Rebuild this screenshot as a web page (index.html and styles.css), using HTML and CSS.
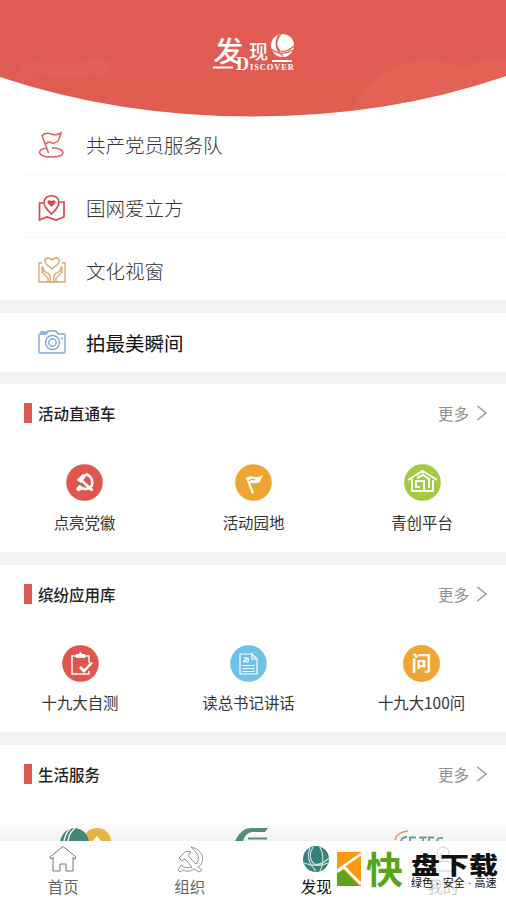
FILE: index.html
```html
<!DOCTYPE html>
<html lang="zh-CN">
<head>
<meta charset="utf-8">
<title>发现</title>
<link rel="stylesheet" href="styles.css">
</head>
<body>
<div class="app">
  <header class="hero">
    <svg class="hero-art" viewBox="0 0 506 117" width="506" height="117">
      <defs>
        <linearGradient id="red" x1="0" y1="0" x2="0" y2="1"><stop offset="0" stop-color="#e25a54"/><stop offset="1" stop-color="#df5d50"/></linearGradient>
        <clipPath id="arc"><path d="M0 0H506V76Q388 116.500 253 116.500Q118 116.500 0 77Z"/></clipPath>
      </defs>
      <g clip-path="url(#arc)">
        <path fill="url(#red)" d="M0 0H506V117H0Z"/>
        <path fill="#e36658" opacity=".6" d="M352 110Q376 64 422 60Q452 60 466 68Q480 54 506 60V117H352Z"/>
        <path fill="#e46b62" opacity=".35" d="M16 78Q18 64 34 61Q60 68 90 60Q112 58 112 66Q102 82 96 74Q60 84 36 72L27 80Z"/>
      </g>
      <g fill="#fff">
        <text class="logo-fa" transform="translate(213 61.500) skewX(-5)">发</text>
        <text class="logo-xian" x="249" y="59">现</text>
        <text class="logo-d" x="236" y="69.500">D</text>
        <text class="logo-en" x="250" y="69.500" textLength="44">ISCOVER</text>
        <path d="M213 66.500h20v2h-20zM272 60h20v2h-20z"/>
        <circle cx="282.500" cy="45.500" r="11.500"/>
      </g>
      <g fill="none" stroke="#df5b52" stroke-width="1.200"><path d="M279 34.500Q272 47 283 56.500M281 34Q273 44 280 51Q286 53 294 46M271 49Q281 57 293 50"/></g>
    </svg>
  </header>

  <nav class="list">
    <a class="row"><svg class="row-icon" viewBox="0 0 28 28" fill="none" stroke="#d95f62" stroke-width="1.500"><path d="M10.500 22L4 4.500Q8 1 13 3Q18 5 23 2Q22 6 20 10Q15 14 12 11Q9 11 8 13M9 17Q1.500 18 1.500 21.500Q3 26 13 26Q25 26 25 21.500Q24 17 14 17"/></svg><span>共产党员服务队</span></a>
    <a class="row row-mid"><svg class="row-icon" viewBox="0 0 28 28" fill="none" stroke="#d4494e" stroke-width="1.700"><path d="M5 9H1.500V26L9 23L18 26L26 23V8H22M13.500 20Q6 13 6 8.500C6 -.5 21 -.5 21 8.500Q21 13 13.500 20Z"/><path fill="#d4494e" stroke="none" d="M13.500 13L9.500 9Q9 5 13.500 7Q18 5 17.500 9Z"/></svg><span>国网爱立方</span></a>
    <a class="row"><svg class="row-icon" viewBox="0 0 28 28" fill="none" stroke="#d9a568" stroke-width="1.300"><path d="M4 6H1V25H27V6H24M14 12L8 7Q5 1 10 1Q13 1 14 3Q16 1 19 1Q23 2 20 7ZM4 10V15L10 21V25M4 10Q5 9 6 14L11 17Q13 19 12 25M24 10V15L18 21V25M24 10Q23 9 22 14L17 17Q15 19 16 25"/></svg><span>文化视窗</span></a>
  </nav>

  <nav class="list list-single">
    <a class="row row-dark"><svg class="row-icon" viewBox="0 0 28 28" fill="none" stroke="#7ba6d6" stroke-width="1.400"><path d="M1 6Q1 5 2 5H8L10 2H18L20 5H26Q27 5 27 6V23Q27 24 26 24H2Q1 24 1 23ZM3 5V3H7V5"/><circle cx="14.500" cy="13.500" r="7"/><circle cx="14.500" cy="13.500" r="3.700"/><path d="M23 9.500h2"/></svg><span>拍最美瞬间</span></a>
  </nav>

  <section class="panel">
    <div class="panel-head"><h2>活动直通车</h2><a class="more">更多<svg viewBox="0 0 12 18" width="12" height="18"><path d="M1.500 2L10 9L1.500 16"/></svg></a></div>
    <div class="grid grid-a">
      <a class="tile"><svg class="disc" viewBox="0 0 37 37"><circle cx="18.500" cy="18.500" r="18.300" fill="#df564f"/><path fill="none" stroke="#fff" stroke-width="2.600" d="M19.500 10C29 13 28 25 20 25Q16 25 13 22M15 16L26.500 26.500"/><path fill="#fff" d="M10.500 16L17 10L21 11L15 19ZM10 25L13 21L17 25L12 27.500Z"/></svg><span>点亮党徽</span></a>
      <a class="tile"><svg class="disc" viewBox="0 0 37 37"><circle cx="18.500" cy="18.500" r="18.300" fill="#efa534"/><path fill="#fff" d="M11 14Q15 11 19 13Q23 14 28 11Q26 14 25 18Q20 20 15 19L19 29L17 30Z"/><path fill="none" stroke="#efa534" stroke-width="1.200" d="M14 17Q17 14 20 16"/></svg><span>活动园地</span></a>
      <a class="tile"><svg class="disc" viewBox="0 0 37 37"><circle cx="18.500" cy="18.500" r="18.300" fill="#a3c93c"/><g fill="none" stroke="#fff" stroke-width="2"><path d="M4 16L18.500 7L33 16M8 15V27H20V17H12V23H16M13 14L19 11L25 15V24M20 27H29V16"/></g></svg><span>青创平台</span></a>
    </div>
  </section>

  <section class="panel panel-apps">
    <div class="panel-head"><h2>缤纷应用库</h2><a class="more">更多<svg viewBox="0 0 12 18" width="12" height="18"><path d="M1.500 2L10 9L1.500 16"/></svg></a></div>
    <div class="grid grid-b">
      <a class="tile"><svg class="disc" viewBox="0 0 37 37"><circle cx="18.500" cy="18.500" r="18.300" fill="#df564f"/><path fill="none" stroke="#fff" stroke-width="1.500" d="M27 18V11H10V29H27V26"/><path fill="#fff" d="M14 9H17Q18.500 5 20 9H23V13H14ZM17 23L19 21L22 24L29 17L31 18L22 28Z"/></svg><span>十九大自测</span></a>
      <a class="tile"><svg class="disc" viewBox="0 0 37 37"><circle cx="18.500" cy="18.500" r="18.300" fill="#6fc1e5"/><g fill="none" stroke="#fff" stroke-width="1.200"><path d="M22 9H10V29H27V14L22 9V14H27M12.500 20.500H24.500M12.500 23.500H24.500M12.500 26.500H24.500M13 17L18 13M14 13Q20 12 18 17L13 16"/></g></svg><span>读总书记讲话</span></a>
      <a class="tile"><span class="disc disc-ask">问</span><span>十九大100问</span></a>
    </div>
  </section>

  <section class="panel panel-last">
    <div class="panel-head"><h2>生活服务</h2><a class="more">更多<svg viewBox="0 0 12 18" width="12" height="18"><path d="M1.500 2L10 9L1.500 16"/></svg></a></div>
    <div class="peek">
      <svg viewBox="0 0 506 14" width="506" height="14">
        <circle cx="97" cy="15" r="14" fill="#e9b344"/><path fill="#fff" d="M93 14L97 9L101 14Z"/>
        <path fill="#438777" d="M60 14Q64 1 75 1Q86 2 89 14Z"/><path fill="none" stroke="#fff" stroke-width="1.300" d="M64 14Q66 5 71 1M68 14Q69 6 75 1"/>
        <path fill="#4e8d80" d="M235 14Q241 1 251 1H268L265 5H252Q245 6 243 14ZM248 10.500H267V12.500H248Z"/>
        <path fill="none" stroke="#e39a70" stroke-width="1.700" d="M395 13Q397 5 408 4"/>
        <path fill="none" stroke="#6b9a91" stroke-width="1.800" d="M401 14Q402 10 407 10M410 14V10.500H416M419 10.500H427M423 10V14M429 14V10.500H434M437 14Q437 10 443 11"/>
      </svg>
    </div>
  </section>

  <footer class="tabs">
    <a class="tab"><svg viewBox="0 0 28 28" fill="none" stroke="#777" stroke-width="1"><path d="M4 12V26H11V19H17V26H24V12M4 13L2 14L1 12L14 1.500L27 12L26 14L24 13"/></svg><span>首页</span></a>
    <a class="tab"><svg viewBox="0 0 28 28" fill="none" stroke="#888" stroke-width=".9"><path d="M15 2C29 5 29 18 22 22L26 25L23 27L18 24Q12 28 7 25L4 27L2 25L5 20Q9 24 16 22L9 14L6 16L3 13L10 6L15 7L12 11L20 19Q27 12 15 2Z"/></svg><span>组织</span></a>
    <a class="tab tab-on"><svg viewBox="0 0 28 28"><circle cx="14" cy="14" r="13" fill="#397f79"/><path fill="none" stroke="#cde4df" stroke-width="1.100" d="M8 3Q3 15 14 26M11 2Q5 12 12 19Q19 21 27 13M2 18Q15 23 26 18M18 2Q24 14 18 26"/></svg><span>发现</span></a>
    <a class="tab tab-faint"><svg viewBox="0 0 28 28" fill="none" stroke="#ccc" stroke-width="1"><circle cx="14" cy="8" r="6"/><path d="M3 26Q3 16 14 16Q25 16 25 26Z"/></svg><span>我的</span></a>
    <div class="mark">
      <svg viewBox="0 0 24 34" width="24" height="34"><path fill="#fb9a0c" d="M0 0H24V34H0Z"/><path fill="#58a618" d="M0 20L7 18L22 34H0Z"/><path fill="none" stroke="#fff" stroke-width="2.600" d="M24 2L1 18M0 20L7 15L24 32"/></svg>
      <b class="mark-kuai">快</b>
      <div class="mark-words"><b>盘下载</b><small>绿色 · 安全 · 高速</small></div>
    </div>
  </footer>
</div>
</body>
</html>
```

FILE: styles.css
```css
* { box-sizing: border-box; }
body {
  margin: 0;
  background: #fff;
  color: #333;
  font-family: "Noto Sans CJK SC", "Noto Sans", sans-serif;
}
.app {
  width: 506px;
  height: 900px;
  overflow: hidden;
  display: flex;
  flex-direction: column;
  background: #f2f2f2;
}
.hero { height: 117px; background: #fff; flex: none; }
.hero-art { display: block; }
.logo-fa { font-size: 29px; font-weight: 500; }
.logo-xian { font-size: 19px; font-weight: 500; }
.logo-d { font: 700 18px "Liberation Serif", serif; }
.logo-en { font: 700 8.500px "Liberation Serif", serif; }

.list { height: 183px; padding: 0 0 0 24px; background: #fff; flex: none; }
.row {
  height: 63px;
  display: flex;
  align-items: center;
  gap: 20px;
  padding: 0 0 0 14px;
  font-size: 19.500px;
  font-weight: 300;
  line-height: 28px;
  border-bottom: 1px solid #f8f8f8;
}
.list .row:first-child { height: 58px; padding-bottom: 2px; }
.list .row-mid { padding-top: 4px; }
.list .row:last-child { border-bottom: 0; padding-top: 2px; }
.row-icon { width: 28px; height: 28px; flex: none; }
.list-single { height: 59px; margin-top: 13px; }
.list-single .row:first-child { height: 59px; padding: 0 0 0 14px; }
.row-dark { color: #111; font-weight: 400; }

.panel { height: 168px; margin-top: 12px; background: #fff; flex: none; }
.panel + .panel { margin-top: 13px; }
.panel-head {
  height: 58px;
  display: flex;
  align-items: center;
  justify-content: space-between;
  padding: 0 18px 0 24px;
}
.panel-head h2 {
  margin: 0;
  display: flex;
  align-items: center;
  gap: 6px;
  font-size: 15.500px;
  font-weight: 500;
  color: #222;
}
.panel-head h2::before { content: ""; width: 8px; height: 20px; background: #dc5953; }
.more { display: flex; align-items: center; gap: 7px; font-size: 15.500px; color: #929292; }
.more svg { fill: none; stroke: #999; stroke-width: 1.500; }
.grid { display: grid; padding-top: 22px; }
.grid-a { grid-template-columns: 169px 169px 168px; }
.grid-b { grid-template-columns: 160px 177px 169px; }
.tile {
  display: flex;
  flex-direction: column;
  align-items: center;
  gap: 10px;
  font-size: 15.400px;
  line-height: 22px;
}
.grid-b .tile { gap: 9px; }
.disc { width: 37px; height: 37px; display: block; }
.disc-ask {
  border-radius: 50%;
  background: #efa534;
  color: #fff;
  font-size: 20px;
  font-weight: 700;
  line-height: 36px;
  text-align: center;
}
.panel-apps { height: 167px; }
.panel-last { height: 96px; display: flex; flex-direction: column; justify-content: space-between; background: linear-gradient(#fff 78%, #f2f2f2); }
.peek { height: 14px; }
.peek svg { display: block; }

.tabs {
  position: relative;
  height: 59px;
  flex: none;
  display: grid;
  grid-template-columns: repeat(4, 126.500px);
  background: #fff;
}
.tab { display: flex; flex-direction: column; align-items: center; padding-top: 4px; font-size: 15.500px; line-height: 22px; color: #666; gap: 2px; }
.tab svg { width: 28px; height: 28px; }
.tab-on { color: #111; }
.tab-faint { color: #ccc; }
.mark { position: absolute; left: 337px; top: 11px; display: flex; }
.mark-kuai { margin-left: 5px; width: 39px; font-size: 37px; line-height: 32px; font-weight: 700; color: #58a618; }
.mark-words { margin-left: 6px; display: flex; flex-direction: column; color: #111; white-space: nowrap; }
.mark-words b { font-size: 29px; line-height: 24px; font-weight: 900; transform: translateY(-1px) scaleY(.84); }
.mark-words small { font: 400 11px/14px "Liberation Sans", "Noto Sans CJK SC", sans-serif; }
```
